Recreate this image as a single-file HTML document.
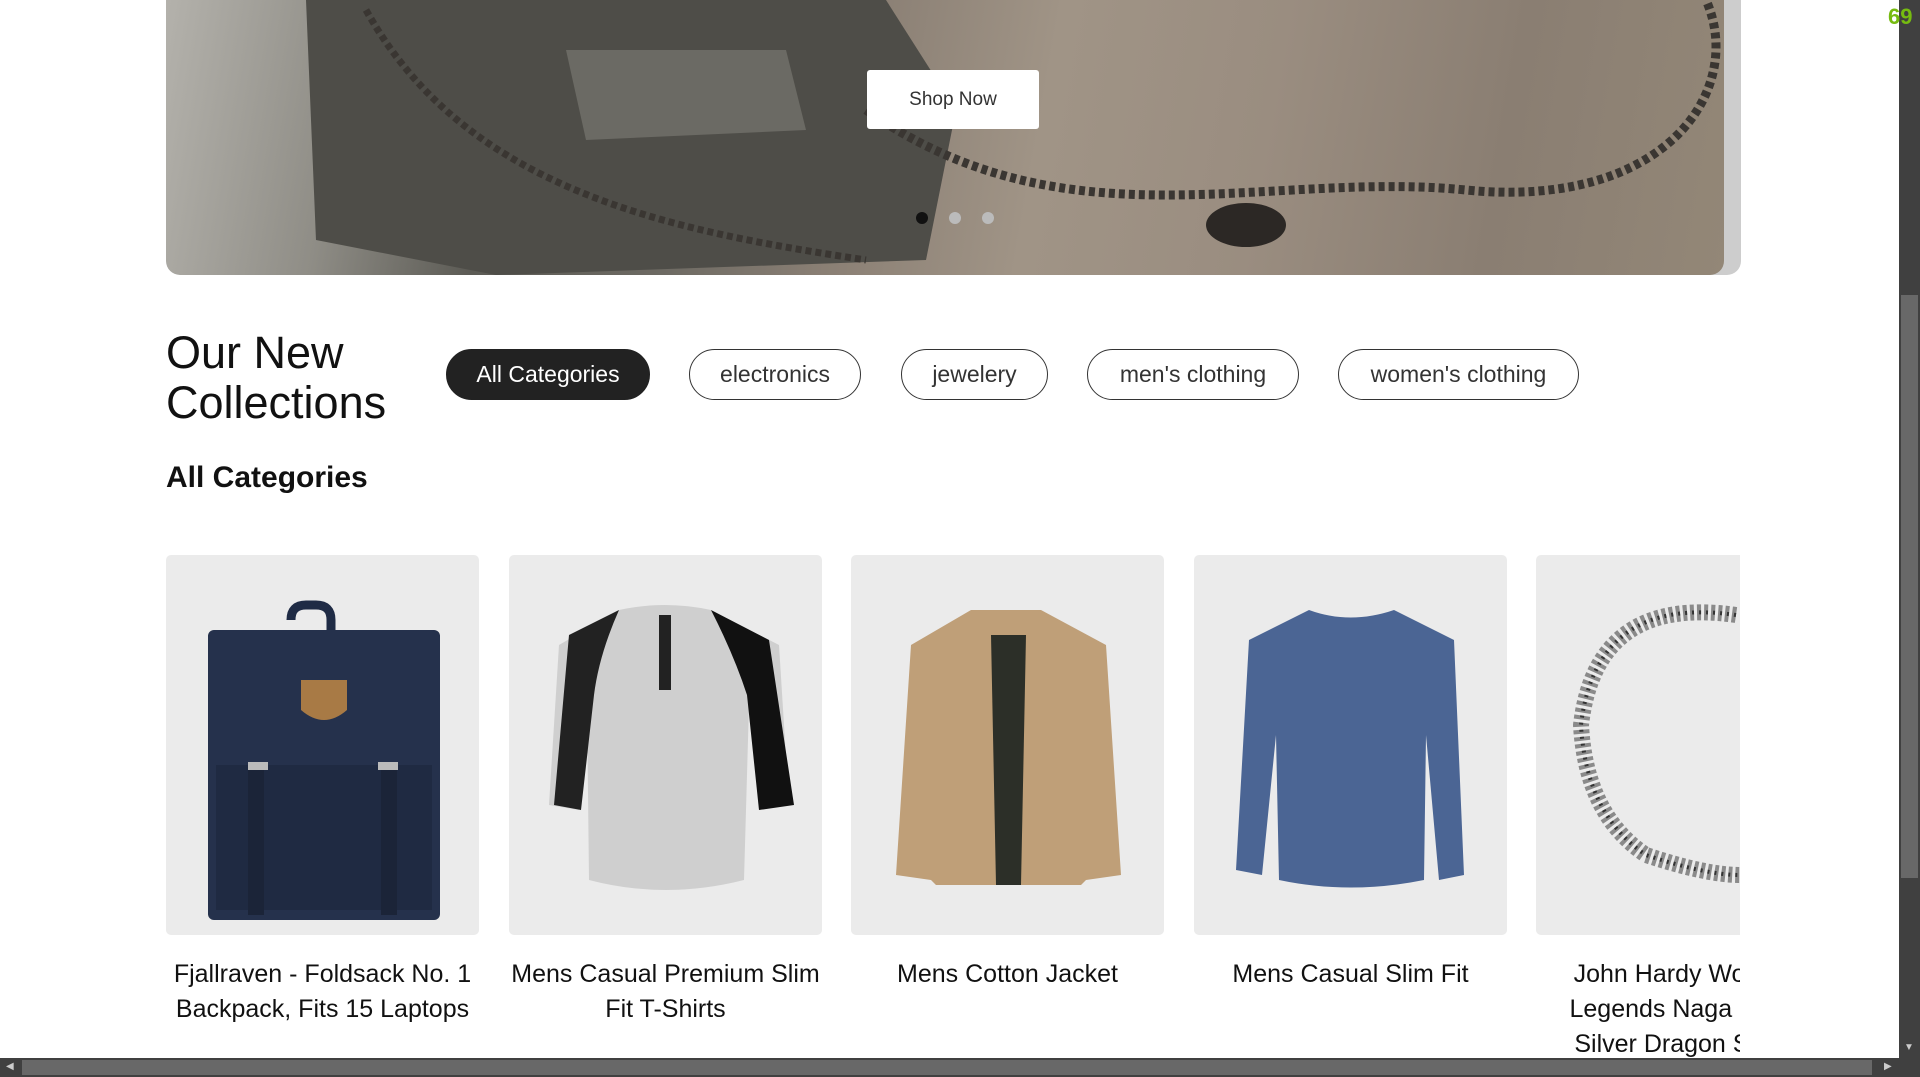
<!DOCTYPE html>
<html><head><meta charset="utf-8"><style>
*{margin:0;padding:0;box-sizing:border-box}
html,body{width:1920px;height:1077px;overflow:hidden;background:#fff;font-family:"Liberation Sans",sans-serif;color:#111}
.banner{position:absolute;left:166px;top:-10px;width:1575px;height:285px;background:#cdcdcd;border-radius:0 0 14px 14px;overflow:hidden}
.img{position:absolute;left:0;top:0;width:1558px;height:285px;border-radius:0 0 14px 14px;overflow:hidden;
background:linear-gradient(100deg,#b4b2ac 0%,#8f8d86 12%,#5c5b55 22%,#6d6a63 34%,#8a7f74 44%,#a09486 56%,#9a8d80 70%,#8a7e72 85%,#938777 100%)}
.btn{position:absolute;left:701px;top:80px;width:172px;height:59px;background:#fff;border-radius:3px;font-size:19px;color:#333;display:flex;align-items:center;justify-content:center}
.dot{position:absolute;width:12px;height:12px;border-radius:50%;background:#bbb}
h1{position:absolute;left:166px;top:328px;font-size:45px;line-height:50px;font-weight:500;color:#111}
.pill{position:absolute;top:349px;height:51px;border:1.5px solid #333;border-radius:26px;font-size:23px;display:flex;align-items:center;justify-content:center;color:#333}
.pill.on{background:#222;color:#fff;border-color:#222}
h2{position:absolute;left:166px;top:461px;font-size:30px;font-weight:700}
.card{position:absolute;top:555px;width:313px;height:380px;background:#ebebeb;border-radius:5px;overflow:hidden}
.t{position:absolute;top:957px;width:313px;text-align:center;font-size:25px;line-height:35px;color:#111}
.vs{position:absolute;left:1899px;top:0;width:21px;height:1077px;background:#404040}
.hs{position:absolute;left:0;top:1058px;width:1899px;height:19px;background:#404040}
</style></head><body>
<div class="banner"><div class="img">
<svg width="1558" height="285" style="position:absolute;left:0;top:0">
<path d="M140 10 L720 10 L790 120 L760 270 L330 285 L150 250 Z" fill="#4e4d48"/>
<path d="M400 60 L620 60 L640 140 L420 150 Z" fill="#6b6a64"/>
<ellipse cx="1080" cy="235" rx="40" ry="22" fill="#2c2825"/>
<path d="M700 120 C900 260 1100 180 1300 200 S1580 100 1540 10" stroke="#3a3632" stroke-width="9" fill="none" stroke-dasharray="6 4"/>
<path d="M200 20 C300 200 500 240 700 270" stroke="#3a3632" stroke-width="7" fill="none" stroke-dasharray="6 4"/>
</svg>
</div>
<div class="btn">Shop Now</div>
<div class="dot" style="left:750px;top:222px;background:#111"></div>
<div class="dot" style="left:783px;top:222px"></div>
<div class="dot" style="left:816px;top:222px"></div>
</div>
<h1>Our New<br>Collections</h1>
<div class="pill on" style="left:446px;width:204px">All Categories</div>
<div class="pill" style="left:689px;width:172px">electronics</div>
<div class="pill" style="left:901px;width:147px">jewelery</div>
<div class="pill" style="left:1087px;width:212px">men's clothing</div>
<div class="pill" style="left:1338px;width:241px">women's clothing</div>
<h2>All Categories</h2>

<div class="card" style="left:166px"><svg width="313" height="380">
<path d="M125 65 Q125 50 140 50 L150 50 Q165 50 165 65 L165 75" stroke="#1f2b45" stroke-width="9" fill="none"/>
<rect x="42" y="75" width="232" height="290" rx="6" fill="#25314c"/>
<path d="M50 210 L266 210 L266 355 L50 355 Z" fill="#1f2a42"/>
<path d="M135 125 h46 v30 q-23 20 -46 0 Z" fill="#a87a45"/>
<rect x="82" y="210" width="16" height="150" fill="#1b2438"/><rect x="215" y="210" width="16" height="150" fill="#1b2438"/>
<rect x="82" y="207" width="20" height="8" fill="#bbb"/><rect x="212" y="207" width="20" height="8" fill="#bbb"/>
</svg></div>
<div class="card" style="left:509px"><svg width="313" height="380">
<path d="M110 55 Q156 45 202 55 L270 90 L280 250 L250 255 L240 150 L235 325 Q156 345 80 325 L78 150 L70 255 L40 250 L50 90 Z" fill="#cfcfcf"/>
<path d="M110 55 L60 80 L45 250 L72 255 L85 140 Q90 100 110 55Z" fill="#222"/>
<path d="M202 55 L260 85 L285 250 L250 255 L238 140 Q225 100 202 55Z" fill="#111"/>
<rect x="150" y="60" width="12" height="75" fill="#222"/>
</svg></div>
<div class="card" style="left:851px"><svg width="313" height="380">
<path d="M120 55 L190 55 L255 90 L270 320 L235 325 L230 330 L85 330 L80 325 L45 320 L60 90 Z" fill="#bf9f78"/>
<path d="M140 80 L175 80 L170 330 L145 330 Z" fill="#2c2f28"/>
</svg></div>
<div class="card" style="left:1194px"><svg width="313" height="380">
<path d="M115 55 Q156 70 200 55 L260 85 L270 320 L245 325 L232 180 L230 325 Q156 340 85 325 L82 180 L68 320 L42 315 L55 85 Z" fill="#4b6594"/>
</svg></div>
<div class="card" style="left:1536px;width:204px;border-radius:5px 0 0 5px"><svg width="204" height="380">
<path d="M200 60 Q60 40 45 170 Q50 260 110 300 Q170 320 204 320" stroke="#8a8a8a" stroke-width="16" fill="none" stroke-dasharray="4 3"/>
<path d="M200 60 Q60 40 45 170 Q50 260 110 300 Q170 320 204 320" stroke="#333" stroke-width="4" fill="none" stroke-dasharray="2 5"/>
</svg></div>

<div class="t" style="left:166px">Fjallraven - Foldsack No. 1 Backpack, Fits 15 Laptops</div>
<div class="t" style="left:509px">Mens Casual Premium Slim Fit T-Shirts</div>
<div class="t" style="left:851px">Mens Cotton Jacket</div>
<div class="t" style="left:1194px">Mens Casual Slim Fit</div>
<div style="position:absolute;left:1536px;top:957px;width:204px;overflow:hidden;height:100px"><div class="t" style="position:static;width:313px">John Hardy Women's Legends Naga Gold &amp; Silver Dragon Station</div></div>

<div class="vs"><div style="position:absolute;left:2px;top:295px;width:17px;height:583px;background:#686868"></div>
<div style="position:absolute;left:5px;top:1042px;color:#ccc;font-size:10px">▼</div></div>
<div class="hs"><div style="position:absolute;left:22px;top:2px;width:1850px;height:15px;background:#686868"></div>
<div style="position:absolute;left:6px;top:3px;color:#ccc;font-size:10px">◀</div><div style="position:absolute;left:1884px;top:3px;color:#ccc;font-size:10px">▶</div></div>
<div style="position:absolute;left:1888px;top:4px;color:#76bb10;font-weight:700;font-size:22px">69</div>
</body></html>
